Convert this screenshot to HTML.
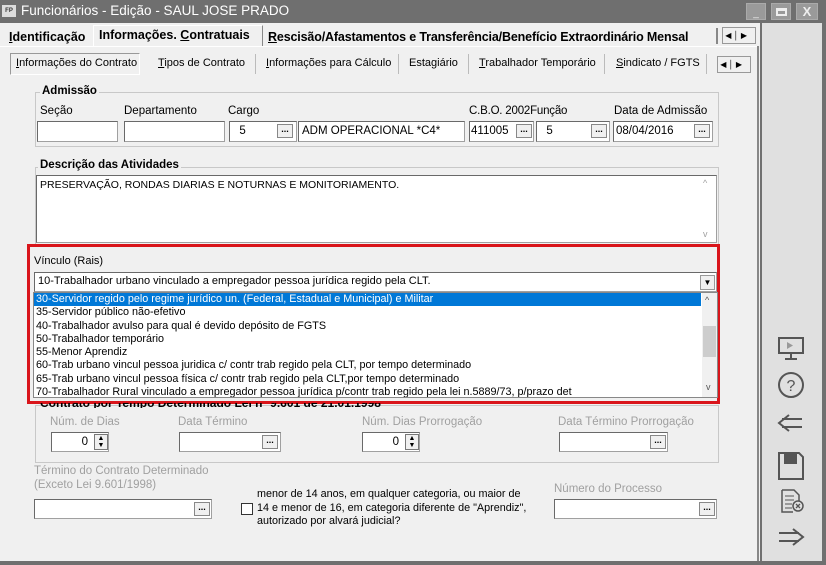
<!DOCTYPE html>
<html><head><meta charset="utf-8"><style>
*{box-sizing:border-box;margin:0;padding:0}
body{width:826px;height:565px;overflow:hidden;background:#f0f0f0;font-family:"Liberation Sans",sans-serif;font-size:11px;color:#000;position:relative}
.a{position:absolute}
.inp{position:absolute;background:#fff;border:1px solid #a0a0a0;border-top-color:#696969;border-left-color:#696969;font-size:11.5px;padding:3px 3px;white-space:nowrap}
.btn{position:absolute;width:16px;height:14px;background:#f0f0f0;border:1px solid #888;font-size:9px;line-height:9px;text-align:center;font-weight:bold}
.lbl{position:absolute;font-size:11.5px;white-space:nowrap}
.g{color:#a0a0a0}
.grp{position:absolute;border:1px solid #c8c8c8}
.ttl{position:absolute;font-weight:bold;background:#f0f0f0;padding:0 2px;font-size:11.5px}
.li{height:13.3px;line-height:13px;padding-left:2px;font-size:10.8px;white-space:nowrap}
u{text-decoration:underline}
</style></head><body>
<div class="a" style="left:0;top:0;width:826px;height:23px;background:#6f6f6f"></div>
<div class="a" style="left:2px;top:5px;width:14px;height:12px;background:#ddd;font-size:6px;font-weight:bold;text-align:center;line-height:12px;color:#333">FP</div>
<div class="lbl" style="left:21px;top:3px;font-size:13.5px;color:#fff">Funcionários - Edição - SAUL JOSE PRADO</div>
<div class="a" style="left:746px;top:3px;width:20px;height:17px;background:#9a9a9a;border:1px solid #aaa;color:#eee;font-size:10px;text-align:center;line-height:20px">_</div>
<div class="a" style="left:771px;top:3px;width:20px;height:17px;background:#9a9a9a;border:1px solid #aaa"><div style="margin:4px 4px;width:11px;height:8px;border:2px solid #eee;border-top-width:3px"></div></div>
<div class="a" style="left:796px;top:3px;width:22px;height:17px;background:#9a9a9a;border:1px solid #aaa;color:#eee;font-weight:bold;font-size:13px;text-align:center;line-height:16px">X</div>

<div class="a" style="left:760px;top:23px;width:66px;height:542px;background:#e0e0e0;border-left:2px solid #707070;border-right:4px solid #707070"></div>
<div class="a" style="left:0;top:561px;width:826px;height:4px;background:#6f6f6f"></div>

<!-- main tabs -->
<div class="lbl" style="left:9px;top:30px;font-size:12.5px;font-weight:bold"><u>I</u>dentificação</div>
<div class="a" style="left:93px;top:25px;width:170px;height:22px;background:#f0f0f0;border:1px solid #fff;border-right-color:#888;border-bottom:none"></div>
<div class="lbl" style="left:99px;top:28px;font-size:12.5px;font-weight:bold">Informações. <u>C</u>ontratuais</div>
<div class="lbl" style="left:268px;top:30px;font-size:12.5px;font-weight:bold;letter-spacing:-0.15px"><u>R</u>escisão/Afastamentos e Transferência/Benefício Extraordinário Mensal</div>
<div class="a" style="left:716px;top:28px;width:2px;height:16px;background:#888"></div>
<div class="a" style="left:722px;top:27px;width:34px;height:17px;background:#f0f0f0;border:1px solid #999;font-size:8px;line-height:15px">&nbsp;◀&nbsp;│&nbsp;▶</div>
<div class="a" style="left:0;top:46px;width:758px;height:1px;background:#fff"></div>
<div class="a" style="left:757px;top:46px;width:2px;height:515px;background:#888"></div>

<!-- sub tabs -->
<div class="a" style="left:10px;top:53px;width:130px;height:22px;border:1px solid #999;border-bottom-color:#fff;border-right-color:#fff"></div>
<div class="lbl" style="left:16px;top:57px;font-size:11px"><u>I</u>nformações do Contrato</div>
<div class="lbl" style="left:158px;top:57px;font-size:11px"><u>T</u>ipos de Contrato</div>
<div class="a" style="left:255px;top:54px;width:1px;height:20px;background:#bbb"></div>
<div class="lbl" style="left:266px;top:57px;font-size:11px"><u>I</u>nformações para Cálculo</div>
<div class="a" style="left:398px;top:54px;width:1px;height:20px;background:#bbb"></div>
<div class="lbl" style="left:409px;top:57px;font-size:11px">Estagiário</div>
<div class="a" style="left:468px;top:54px;width:1px;height:20px;background:#bbb"></div>
<div class="lbl" style="left:479px;top:57px;font-size:11px"><u>T</u>rabalhador Temporário</div>
<div class="a" style="left:604px;top:54px;width:1px;height:20px;background:#bbb"></div>
<div class="lbl" style="left:616px;top:57px;font-size:11px"><u>S</u>indicato / FGTS</div>
<div class="a" style="left:706px;top:54px;width:1px;height:20px;background:#bbb"></div>
<div class="a" style="left:717px;top:56px;width:34px;height:17px;background:#f0f0f0;border:1px solid #999;font-size:8px;line-height:15px">&nbsp;◀&nbsp;│&nbsp;▶</div>

<!-- Admissão -->
<div class="grp" style="left:35px;top:92px;width:684px;height:55px"></div>
<div class="ttl" style="left:40px;top:85px">Admissão</div>
<div class="lbl" style="left:40px;top:105px">Seção</div>
<div class="lbl" style="left:124px;top:105px">Departamento</div>
<div class="lbl" style="left:228px;top:105px">Cargo</div>
<div class="lbl" style="left:469px;top:105px;letter-spacing:-0.2px">C.B.O. 2002Função</div>
<div class="lbl" style="left:614px;top:105px">Data de Admissão</div>
<div class="inp" style="left:37px;top:121px;width:81px;height:21px"></div>
<div class="inp" style="left:124px;top:121px;width:101px;height:21px"></div>
<div class="inp" style="left:229px;top:121px;width:68px;height:21px">&nbsp;&nbsp;5</div><div class="btn" style="left:277px;top:124px">...</div>
<div class="inp" style="left:298px;top:121px;width:167px;height:21px">ADM OPERACIONAL *C4*</div>
<div class="inp" style="left:469px;top:121px;width:65px;height:21px;padding-left:1px">411005</div><div class="btn" style="left:516px;top:124px">...</div>
<div class="inp" style="left:536px;top:121px;width:74px;height:21px">&nbsp;&nbsp;5</div><div class="btn" style="left:591px;top:124px">...</div>
<div class="inp" style="left:613px;top:121px;width:100px;height:21px;padding-left:2px">08/04/2016</div><div class="btn" style="left:694px;top:124px">...</div>

<!-- Descrição -->
<div class="grp" style="left:35px;top:167px;width:684px;height:78px"></div>
<div class="ttl" style="left:38px;top:159px">Descrição das Atividades</div>
<div class="inp" style="left:36px;top:175px;width:681px;height:68px;font-size:10.5px;padding:3px 3px">PRESERVAÇÃO, RONDAS DIARIAS E NOTURNAS E MONITORIAMENTO.</div>
<div class="lbl g" style="left:703px;top:178px;font-size:9px">^</div>
<div class="lbl g" style="left:703px;top:229px;font-size:9px">v</div>

<!-- Vinculo -->
<div class="a" style="left:27px;top:244px;width:693px;height:160px;border:3px solid #d9151b;background:#f0f0f0"></div>
<div class="lbl" style="left:34px;top:255px;font-size:11px">Vínculo (Rais)</div>
<div class="inp" style="left:34px;top:272px;width:683px;height:20px;font-size:11px;padding:2px 3px">10-Trabalhador urbano vinculado a empregador pessoa jurídica regido pela CLT.</div>
<div class="a" style="left:700px;top:275px;width:15px;height:15px;border:1px solid #999;background:#f0f0f0;font-size:8px;text-align:center;line-height:13px">▼</div>
<div class="a" style="left:33px;top:292px;width:685px;height:106px;background:#fff;border:1px solid #888;overflow:hidden">
<div class="li" style="background:#0078d7;color:#fff;width:667px">30-Servidor regido pelo regime jurídico un. (Federal, Estadual e Municipal) e Militar</div>
<div class="li">35-Servidor público não-efetivo</div>
<div class="li">40-Trabalhador avulso para qual é devido depósito de FGTS</div>
<div class="li">50-Trabalhador temporário</div>
<div class="li">55-Menor Aprendiz</div>
<div class="li">60-Trab urbano vincul pessoa juridica c/ contr trab regido pela CLT, por tempo determinado</div>
<div class="li">65-Trab urbano vincul pessoa física c/ contr trab regido pela CLT,por tempo determinado</div>
<div class="li">70-Trabalhador Rural vinculado a empregador pessoa jurídica p/contr trab regido pela lei n.5889/73, p/prazo det</div>
<div class="a" style="left:668px;top:0;width:15px;height:104px;background:#f0f0f0"></div>
<div class="a" style="left:669px;top:33px;width:13px;height:31px;background:#cdcdcd"></div>
<div class="lbl" style="left:671px;top:2px;font-size:9px;color:#555">^</div>
<div class="lbl" style="left:672px;top:89px;font-size:9px;color:#555">v</div>
</div>

<!-- Contrato -->
<div class="grp" style="left:35px;top:405px;width:684px;height:58px"></div>
<div class="a" style="left:40px;top:403px;font-weight:bold;height:5px;overflow:hidden;font-size:12px;line-height:0px">Contrato por Tempo Determinado Lei nº 9.601 de 21.01.1998</div>
<div class="lbl g" style="left:50px;top:416px">Núm. de Dias</div>
<div class="lbl g" style="left:178px;top:416px">Data Término</div>
<div class="lbl g" style="left:362px;top:416px">Núm. Dias Prorrogação</div>
<div class="lbl g" style="left:558px;top:416px">Data Término Prorrogação</div>
<div class="inp" style="left:51px;top:432px;width:58px;height:20px;text-align:right;padding-right:20px">0</div>
<div class="a" style="left:94px;top:434px;width:14px;height:16px;border:1px solid #777;background:#f0f0f0;font-size:7px;line-height:7px;text-align:center">▲<br>▼</div>
<div class="inp" style="left:179px;top:432px;width:102px;height:20px"></div><div class="btn" style="left:262px;top:435px">...</div>
<div class="inp" style="left:362px;top:432px;width:58px;height:20px;text-align:right;padding-right:20px">0</div>
<div class="a" style="left:405px;top:434px;width:14px;height:16px;border:1px solid #777;background:#f0f0f0;font-size:7px;line-height:7px;text-align:center">▲<br>▼</div>
<div class="inp" style="left:559px;top:432px;width:109px;height:20px"></div><div class="btn" style="left:650px;top:435px">...</div>

<div class="lbl g" style="left:34px;top:464px;line-height:14px">Término do Contrato Determinado<br>(Exceto Lei 9.601/1998)</div>
<div class="inp" style="left:34px;top:499px;width:178px;height:20px"></div><div class="btn" style="left:194px;top:502px">...</div>
<div class="a" style="left:241px;top:503px;width:12px;height:12px;border:1px solid #333;background:#fff"></div>
<div class="lbl" style="left:257px;top:488px;line-height:13.5px;font-size:10.8px">menor de 14 anos, em qualquer categoria, ou maior de<br>14 e menor de 16, em categoria diferente de "Aprendiz",<br>autorizado por alvará judicial?</div>
<div class="lbl g" style="left:554px;top:483px">Número do Processo</div>
<div class="inp" style="left:554px;top:499px;width:163px;height:20px"></div><div class="btn" style="left:699px;top:502px">...</div>

<!-- right icons -->
<svg class="a" style="left:774px;top:333px" width="34" height="220" viewBox="0 0 34 220" fill="none" stroke="#555" stroke-width="2">
<rect x="5" y="5" width="24" height="15"/><path d="M13 9 L19 12.5 L13 16Z" fill="#999" stroke="none"/><path d="M17 20v5M11 26h12"/>
<circle cx="17" cy="52" r="12"/><text x="17" y="58" font-size="16" text-anchor="middle" fill="#555" stroke="none" font-family="Liberation Sans">?</text>
<path d="M28 86H8M28 94H8M15 82L5 90L15 98"/>
<path d="M5 120h20l4 4v22H5z"/><rect x="11" y="121" width="11" height="9" fill="#555"/>
<path d="M8 157h12l5 5v6M8 157v22h11" stroke-width="1.5"/><path d="M11 163h9M11 167h9M11 171h7M11 175h7" stroke-width="1"/><circle cx="24" cy="173" r="5" stroke-width="1.5"/><path d="M22 171l4 4M26 171l-4 4" stroke-width="1.3"/>
<path d="M5 200h20M5 208h20M19 196l10 8l-10 8"/>
</svg>
</body></html>
